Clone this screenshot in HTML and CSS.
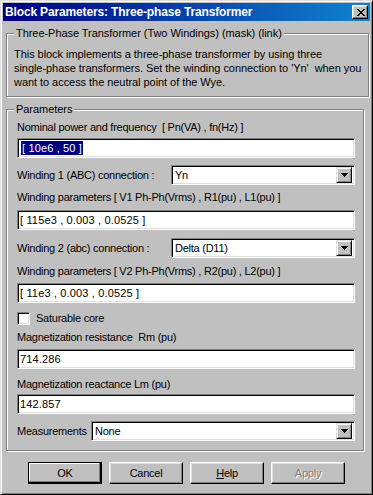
FILE: index.html
```html
<!DOCTYPE html>
<html>
<head>
<meta charset="utf-8">
<title>Block Parameters</title>
<link rel="stylesheet" href="styles.css">
</head>
<body>
<div class="window">
  <div class="titlebar">
    <span class="title">Block Parameters: Three-phase Transformer</span>
    <span class="close"><svg width="8" height="7" viewBox="0 0 8 7"><path d="M0 0h2v1h1v1h2v-1h1v-1h2v1h-1v1h-1v1h-1v1h1v1h1v1h1v1h-2v-1h-1v-1h-2v1h-1v1h-2v-1h1v-1h1v-1h1v-1h-1v-1h-1v-1h-1z"/></svg></span>
  </div>

  <fieldset class="group desc">
    <legend>Three-Phase Transformer (Two Windings) (mask) (link)</legend>
    <p class="desc-text">This block implements a three-phase transformer by using three<br>single-phase transformers. Set the winding connection to 'Yn'&nbsp; when you<br>want to access the neutral point of the Wye.</p>
  </fieldset>

  <fieldset class="group params">
    <legend>Parameters</legend>
    <div class="label">Nominal power and frequency&nbsp; [ Pn(VA) , fn(Hz) ]</div>
    <div class="field mt4"><span class="sel">[ 10e6 , 50 ]</span></div>

    <div class="row mt7">
      <span class="row-label">Winding 1 (ABC) connection :</span>
      <div class="select sel-wide"><span class="sel-text">Yn</span><span class="drop"><svg width="7" height="4" viewBox="0 0 7 4"><path d="M0 0h7v1h-1v1h-1v1h-1v1h-1v-1h-1v-1h-1v-1h-1z"/></svg></span></div>
    </div>

    <div class="label mt5">Winding parameters [ V1 Ph-Ph(Vrms) , R1(pu) , L1(pu) ]</div>
    <div class="field mt6">[ 115e3 , 0.003 , 0.0525 ]</div>

    <div class="row mt8">
      <span class="row-label">Winding 2 (abc) connection :</span>
      <div class="select sel-wide"><span class="sel-text">Delta (D11)</span><span class="drop"><svg width="7" height="4" viewBox="0 0 7 4"><path d="M0 0h7v1h-1v1h-1v1h-1v1h-1v-1h-1v-1h-1v-1h-1z"/></svg></span></div>
    </div>

    <div class="label mt6">Winding parameters [ V2 Ph-Ph(Vrms) , R2(pu) , L2(pu) ]</div>
    <div class="field mt5">[ 11e3 , 0.003 , 0.0525 ]</div>

    <div class="check-row mt8">
      <span class="checkbox"></span>
      <span>Saturable core</span>
    </div>

    <div class="label mt5">Magnetization resistance&nbsp; Rm (pu)</div>
    <div class="field mt5">714.286</div>

    <div class="label mt8">Magnetization reactance Lm (pu)</div>
    <div class="field mt3">142.857</div>

    <div class="row mt7">
      <span class="row-label">Measurements</span>
      <div class="select sel-full"><span class="sel-text">None</span><span class="drop"><svg width="7" height="4" viewBox="0 0 7 4"><path d="M0 0h7v1h-1v1h-1v1h-1v1h-1v-1h-1v-1h-1v-1h-1z"/></svg></span></div>
    </div>
  </fieldset>

  <div class="buttons">
    <div class="btn btn-default">OK</div>
    <div class="btn">Cancel</div>
    <div class="btn"><u>H</u>elp</div>
    <div class="btn btn-disabled">Apply</div>
  </div>
</div>
</body>
</html>
```

FILE: styles.css
```css
html, body {
  margin: 0;
  padding: 0;
  background: #c0c0c0;
}

body {
  font-family: "Liberation Sans", Arial, sans-serif;
  font-size: 11px;
  letter-spacing: -0.25px;
  color: #000;
}

.window {
  box-sizing: border-box;
  width: 373px;
  height: 495px;
  background: #c0c0c0;
  border: 1px solid;
  border-color: #dfdfdf #000 #000 #dfdfdf;
  box-shadow: inset 1px 1px 0 #fff, inset -1px -1px 0 #808080;
  padding: 2px;
  overflow: hidden;
}

.titlebar {
  height: 18px;
  background: linear-gradient(to right, #000080, #1084d0);
  display: flex;
  align-items: center;
  justify-content: space-between;
  padding: 0 2px 0 2px;
}

.title {
  color: #fff;
  font-weight: bold;
  font-size: 12px;
  letter-spacing: -0.15px;
  line-height: 18px;
  white-space: nowrap;
}

.close {
  box-sizing: border-box;
  width: 16px;
  height: 14px;
  background: #c0c0c0;
  border: 1px solid;
  border-color: #fff #000 #000 #fff;
  box-shadow: inset -1px -1px 0 #808080, inset 1px 1px 0 #dfdfdf;
  display: flex;
  align-items: center;
  justify-content: center;
  padding-left: 1px;
}

.close svg, .drop svg {
  display: block;
  fill: #000;
}

.group {
  border: 1px solid #808080;
  box-shadow: inset 1px 1px 0 #fff, 1px 1px 0 #fff;
  margin: 0;
  width: 358px;
  box-sizing: border-box;
  margin-left: 3px;
}

.group legend {
  padding: 0 2px;
  line-height: 14px;
  background: #c0c0c0;
  letter-spacing: -0.05px;
}

.desc {
  margin-top: 5px;
  padding: 7px 7px 7px 7px;
}

.desc legend {
  margin-left: 0;
}

.desc-text {
  margin: 0;
  line-height: 14px;
  white-space: nowrap;
  letter-spacing: -0.05px;
}

.params {
  margin-top: 5px;
  padding: 4px 8px 9px 10px;
}

.params legend {
  margin-left: -3px;
}

.label {
  line-height: 14px;
  height: 14px;
  white-space: nowrap;
}

.mt3 { margin-top: 3px; }
.mt4 { margin-top: 4px; }
.mt5 { margin-top: 5px; }
.mt6 { margin-top: 6px; }
.mt7 { margin-top: 7px; }
.mt8 { margin-top: 8px; }

.field {
  box-sizing: border-box;
  height: 20px;
  background: #fff;
  border: 1px solid;
  border-color: #808080 #fff #fff #808080;
  box-shadow: inset 1px 1px 0 #000, inset -1px -1px 0 #dfdfdf;
  padding: 1px 3px 1px 2px;
  line-height: 16px;
  white-space: nowrap;
  letter-spacing: 0.15px;
}

.sel {
  display: inline-block;
  background: #000080;
  color: #fff;
  line-height: 14px;
  vertical-align: top;
  margin-top: 1px;
  margin-left: 1px;
  padding: 0 1px 0 1px;
}

.row {
  display: flex;
  align-items: center;
  height: 20px;
}

.row-label {
  white-space: nowrap;
  line-height: 14px;
}

.select {
  box-sizing: border-box;
  height: 20px;
  background: #fff;
  border: 1px solid;
  border-color: #808080 #fff #fff #808080;
  box-shadow: inset 1px 1px 0 #000, inset -1px -1px 0 #dfdfdf;
  padding: 2px 2px 2px 3px;
  display: flex;
  align-items: center;
  justify-content: space-between;
  margin-left: auto;
}

.sel-wide { width: 184px; }
.sel-full { width: 264px; }

.sel-text {
  line-height: 16px;
  white-space: nowrap;
}

.drop {
  box-sizing: border-box;
  width: 16px;
  height: 16px;
  background: #c0c0c0;
  border: 1px solid;
  border-color: #dfdfdf #000 #000 #dfdfdf;
  box-shadow: inset 1px 1px 0 #fff, inset -1px -1px 0 #808080;
  display: flex;
  align-items: center;
  justify-content: center;
}

.check-row {
  display: flex;
  align-items: center;
  height: 14px;
  gap: 6px;
}

.checkbox {
  box-sizing: border-box;
  width: 13px;
  height: 13px;
  background: #fff;
  border: 1px solid;
  border-color: #808080 #fff #fff #808080;
  box-shadow: inset 1px 1px 0 #000, inset -1px -1px 0 #dfdfdf;
  margin-top: 1px;
}

.buttons {
  display: flex;
  justify-content: center;
  gap: 7px;
  margin-top: 11px;
}

.btn {
  box-sizing: border-box;
  width: 74px;
  height: 22px;
  border: 1px solid;
  border-color: #fff #000 #000 #fff;
  box-shadow: inset -1px -1px 0 #808080, inset 1px 1px 0 #dfdfdf;
  display: flex;
  align-items: center;
  justify-content: center;
  line-height: 14px;
}

.btn u {
  text-decoration: underline;
}

.btn-default {
  border-color: #000;
  box-shadow: inset -1px -1px 0 #000, inset -2px -2px 0 #808080, inset 1px 1px 0 #fff;
}

.btn-disabled {
  color: #808080;
  text-shadow: 1px 1px 0 #fff;
}
```
